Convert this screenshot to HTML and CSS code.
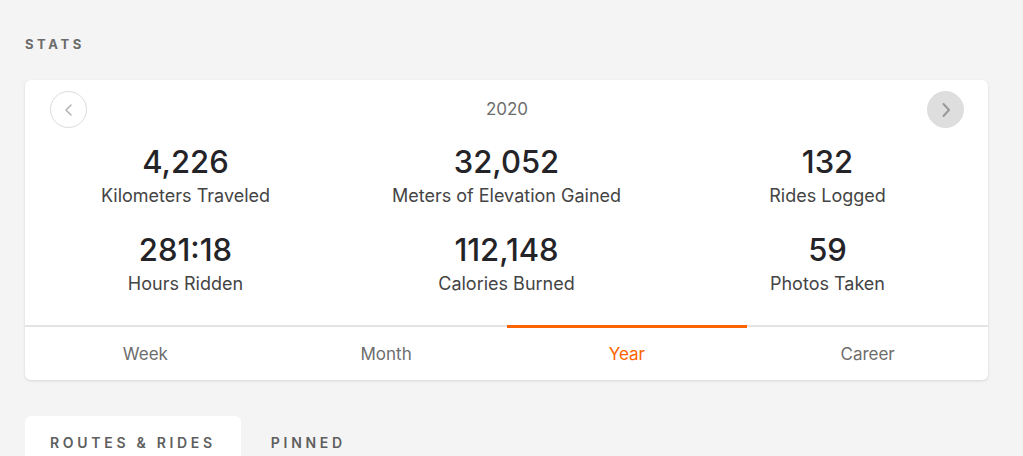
FILE: index.html
```html
<!DOCTYPE html>
<html lang="en">
<head>
<meta charset="utf-8">
<title>Stats</title>
<link rel="stylesheet" href="styles.css">
</head>
<body>
<div class="page">
  <h2 class="section-title">STATS</h2>
  <div class="card">
    <div class="card-head">
      <button class="nav nav-prev" aria-label="Previous">
        <svg width="14" height="14" viewBox="0 0 14 14"><path d="M9 2 L4 7 L9 12" fill="none" stroke="#b5b5b5" stroke-width="1.6" stroke-linecap="round" stroke-linejoin="round"/></svg>
      </button>
      <div class="year">2020</div>
      <button class="nav nav-next" aria-label="Next">
        <svg width="16" height="16" viewBox="0 0 16 16"><path d="M5.5 2 L11 8 L5.5 14" fill="none" stroke="#999" stroke-width="2" stroke-linecap="round" stroke-linejoin="round"/></svg>
      </button>
    </div>
    <div class="stats">
      <div class="stat"><div class="value">4,226</div><div class="label">Kilometers Traveled</div></div>
      <div class="stat"><div class="value">32,052</div><div class="label">Meters of Elevation Gained</div></div>
      <div class="stat"><div class="value">132</div><div class="label">Rides Logged</div></div>
      <div class="stat"><div class="value">281:18</div><div class="label">Hours Ridden</div></div>
      <div class="stat"><div class="value">112,148</div><div class="label">Calories Burned</div></div>
      <div class="stat"><div class="value">59</div><div class="label">Photos Taken</div></div>
    </div>
    <div class="tabs">
      <div class="tab">Week</div>
      <div class="tab">Month</div>
      <div class="tab active">Year</div>
      <div class="tab">Career</div>
    </div>
  </div>
  <div class="lower-tabs">
    <div class="ltab active">ROUTES &amp; RIDES</div>
    <div class="ltab">PINNED</div>
  </div>
</div>
</body>
</html>
```
FILE: styles.css
```css
* { box-sizing: border-box; }
html, body { margin: 0; padding: 0; }
body {
  background: #f4f4f4;
  font-family: Inter, "Liberation Sans", sans-serif;
  color: #242428;
  width: 1023px;
  height: 456px;
  overflow: hidden;
}
.page {
  padding: 35px 35px 0 25px;
}
.section-title {
  margin: 0 0 27px 0;
  font-size: 13px;
  line-height: 18px;
  font-weight: 700;
  letter-spacing: 3.6px;
  color: #6b6b6b;
}
.card {
  width: 963px;
  background: #fff;
  border-radius: 6px;
  box-shadow: 0 1px 3px rgba(0,0,0,0.12);
  padding-top: 11px;
  overflow: hidden;
}
.card-head {
  display: flex;
  align-items: center;
  justify-content: space-between;
  padding: 0 24px 0 25px;
  height: 37px;
}
.nav {
  width: 37px;
  height: 37px;
  border-radius: 50%;
  padding: 0;
  display: flex;
  align-items: center;
  justify-content: center;
  cursor: pointer;
}
.nav-prev { background: #fff; border: 1px solid #dcdcdc; }
.nav-next { background: #dedede; border: 1px solid #dedede; }
.year {
  font-size: 17px;
  color: #6d6d6d;
  line-height: 20px;
  margin-top: -1px;
}
.stats {
  display: grid;
  grid-template-columns: repeat(3, 1fr);
  row-gap: 20px;
  margin-top: 14px;
  text-align: center;
}
.value {
  font-size: 31px;
  line-height: 40px;
  font-weight: 500;
  color: #242428;
}
.label {
  font-size: 18px;
  line-height: 28px;
  color: #444;
}
.tabs {
  display: grid;
  grid-template-columns: repeat(4, 1fr);
  border-top: 2px solid #e4e4e4;
  margin-top: 27px;
}
.tab {
  text-align: center;
  font-size: 17px;
  color: #6d6d6d;
  height: 53px;
  line-height: 54px;
}
.tab.active {
  color: #fc6400;
  border-top: 3px solid #fc6400;
  margin-top: -2px;
  height: 55px;
  line-height: 53px;
}
.lower-tabs {
  display: flex;
  gap: 5px;
  margin-top: 36px;
}
.ltab {
  padding: 17px 25px 20px 25px;
  font-size: 14px;
  line-height: 20px;
  font-weight: 600;
  letter-spacing: 3.7px;
  color: #5e5e5e;
  border-radius: 6px 6px 0 0;
}
.ltab.active { background: #fff; }
```
